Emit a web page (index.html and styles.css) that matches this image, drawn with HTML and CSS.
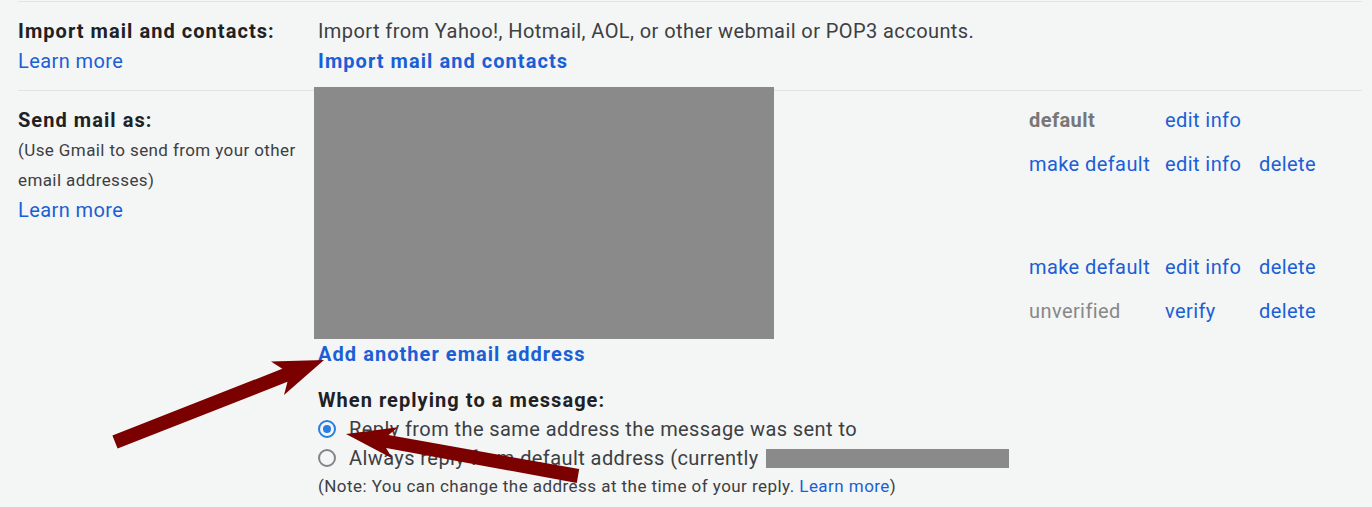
FILE: index.html
```html
<!DOCTYPE html>
<html lang="en">

<head>
    <title>Accounts and Import</title>
    <link rel="stylesheet" href="styles.css">
</head>

<body>
    <div class="settings">

        <div class="setting-row first">
            <div class="label">
                <div class="title">Import mail and contacts:</div>
                <a class="link" href="#">Learn more</a>
            </div>
            <div class="content">
                <div>Import from Yahoo!, Hotmail, AOL, or other webmail or POP3 accounts.</div>
                <a class="link bold" href="#">Import mail and contacts</a>
            </div>
        </div>

        <div class="setting-row">
            <div class="label">
                <div class="title">Send mail as:</div>
                <div class="hint">(Use Gmail to send from your other</div>
                <div class="hint">email addresses)</div>
                <a class="link" href="#">Learn more</a>
            </div>
            <div class="content">
                <div class="accounts">
                    <div class="redacted big"></div>
                    <div class="actions">
                        <div class="act-row">
                            <span class="state strong">default</span>
                            <a class="link" href="#">edit info</a>
                            <span></span>
                        </div>
                        <div class="act-row">
                            <a class="link" href="#">make default</a>
                            <a class="link" href="#">edit info</a>
                            <a class="link" href="#">delete</a>
                        </div>
                        <div class="act-row empty"></div>
                        <div class="act-row">
                            <a class="link" href="#">make default</a>
                            <a class="link" href="#">edit info</a>
                            <a class="link" href="#">delete</a>
                        </div>
                        <div class="act-row">
                            <span class="state">unverified</span>
                            <a class="link" href="#">verify</a>
                            <a class="link" href="#">delete</a>
                        </div>
                    </div>
                </div>

                <a class="link bold" href="#">Add another email address</a>

                <div class="reply-block">
                    <div class="title">When replying to a message:</div>
                    <label class="radio-line"><span class="radio checked"></span>Reply from the same address the message was sent to</label>
                    <label class="radio-line"><span class="radio"></span>Always reply from default address (currently <span class="redacted inline"></span></label>
                    <div class="note">(Note: You can change the address at the time of your reply. <a class="link" href="#">Learn more</a>)</div>
                </div>
            </div>
        </div>
    </div>

    <!-- annotation arrows drawn over the screenshot -->
    <svg class="arrows" width="1372" height="507" viewBox="0 0 1372 507">
        <polygon points="112.4,435.5 282.3,368.8 271,361.5 324,360 284,395 287.5,381.8 117.6,448.5" />
        <polygon points="579.2,469.1 388.5,435.1 398,427.2 346,434 392.4,458.6 386.1,447.9 576.8,482.9" />
    </svg>
</body>

</html>
```

FILE: styles.css
```css
body {
    margin: 0;
    padding: 0;
    background-color: #f4f5f5;
    font-family: Roboto, "Liberation Sans", Arial, sans-serif;
    font-size: 20px;
    letter-spacing: 0.42px;
    color: #3c4043;
    position: relative;
    height: 507px;
    overflow: hidden;
}

.settings {
    padding: 0 10px 0 18px;
}

.setting-row {
    display: flex;
    border-top: 1px solid #e2e3e3;
    padding: 14px 0 14px 0;
}

.setting-row.first {
    margin-top: 1px;
}

.label {
    width: 300px;
    line-height: 30px;
}

.title {
    font-weight: bold;
    color: #202124;
    letter-spacing: 1.05px;
}

.hint {
    font-size: 17px;
    letter-spacing: 0.4px;
}

.content {
    flex: 1;
    line-height: 30px;
}

a.link {
    color: #1a5fd6;
    text-decoration: none;
    display: inline-block;
}

.label a.link {
    display: block;
}

a.link.bold {
    font-weight: bold;
    letter-spacing: 1.05px;
}

.accounts {
    display: flex;
    margin-top: -18px;
    margin-left: -4px;
}

.redacted {
    background-color: #8a8a8a;
}

.redacted.big {
    width: 460px;
    height: 252px;
}

.actions {
    margin-left: 255px;
    margin-top: 11px;
}

.act-row {
    display: grid;
    grid-template-columns: 136px 94px 80px;
    height: 44px;
    line-height: 44px;
}

.act-row.empty {
    height: 59px;
}

.state {
    color: #888;
}

.state.strong {
    font-weight: bold;
    color: #777;
}

.reply-block {
    margin-top: 16px;
}

.radio-line {
    display: block;
    white-space: nowrap;
    line-height: 29px;
}

.radio {
    display: inline-block;
    vertical-align: middle;
    width: 14px;
    height: 14px;
    border: 2px solid #80868b;
    border-radius: 50%;
    margin: -4px 13px 0 0;
    position: relative;
}

.radio.checked {
    border-color: #2a7de1;
}

.radio.checked::after {
    content: "";
    position: absolute;
    left: 3px;
    top: 3px;
    width: 8px;
    height: 8px;
    border-radius: 50%;
    background-color: #2a7de1;
}

.redacted.inline {
    display: inline-block;
    vertical-align: middle;
    width: 243px;
    height: 19px;
    margin: -3px 0 0 2px;
}

.note {
    font-size: 17px;
    letter-spacing: 0.45px;
    line-height: 27px;
}

.arrows {
    position: absolute;
    left: 0;
    top: 0;
    fill: #7b0000;
}
```
